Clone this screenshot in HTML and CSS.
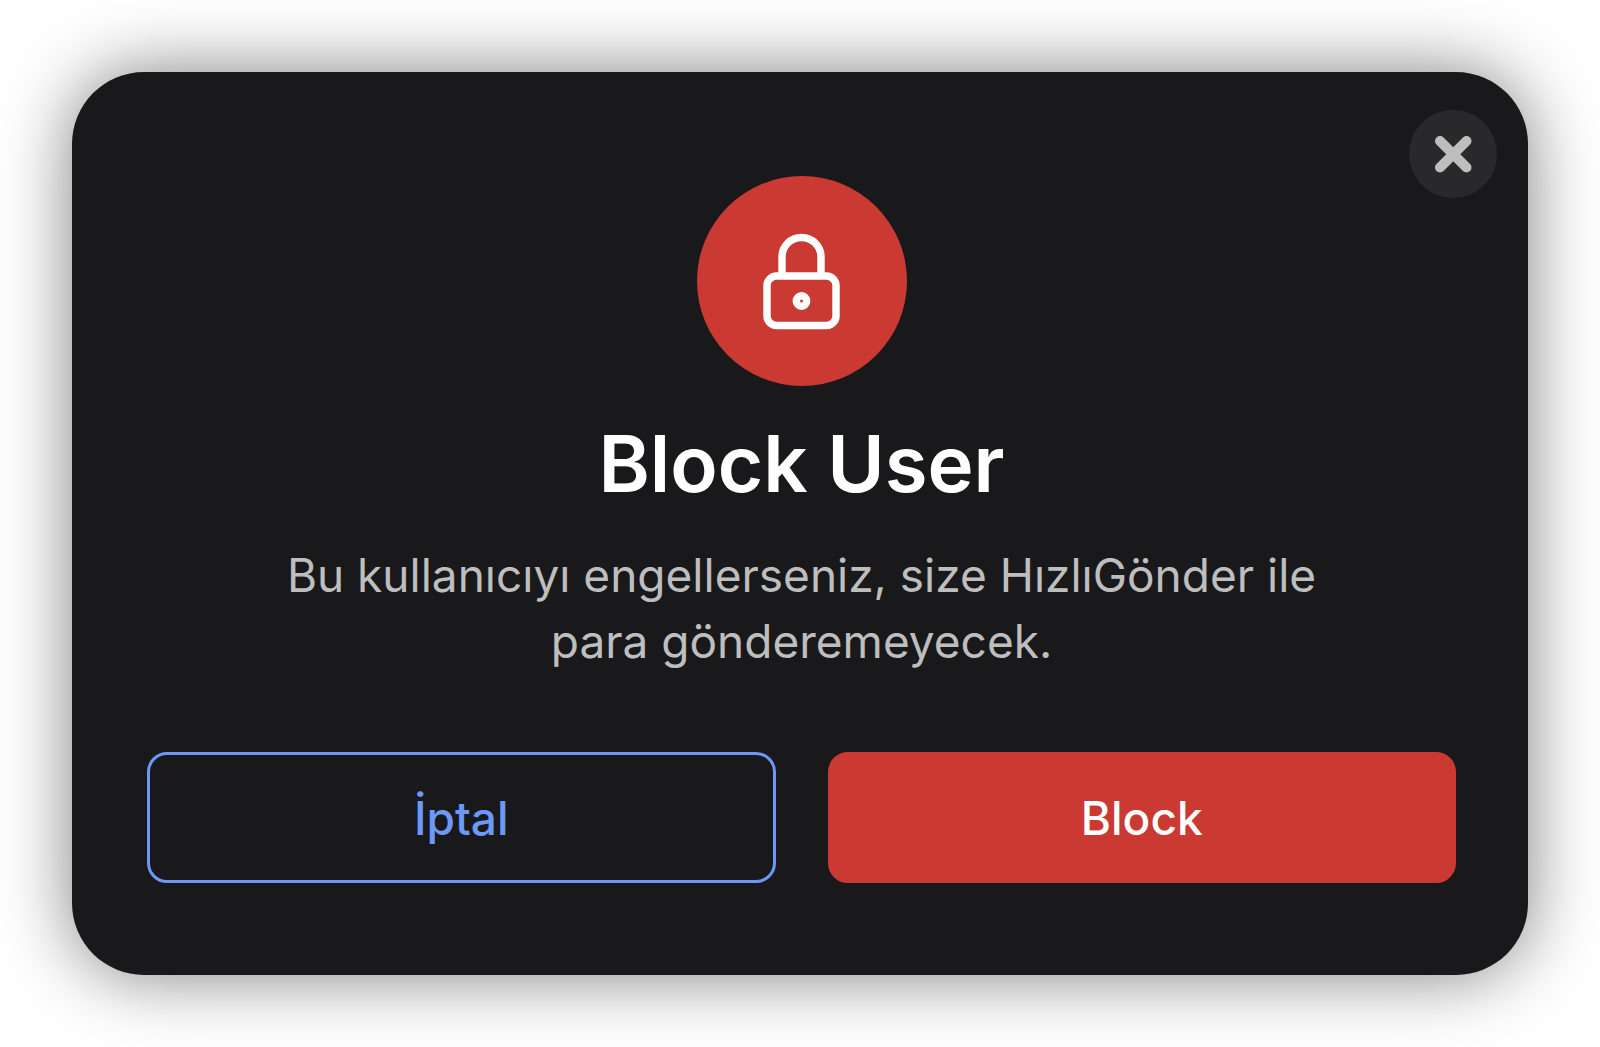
FILE: index.html
```
<!DOCTYPE html>
<html lang="tr">

<head>
	<meta charset="UTF-8">
	<meta name="viewport" content="width=device-width, initial-scale=1">
	<title>Block User</title>
	<link rel="stylesheet" href="styles.css">
</head>

<body>
	<div class="modal" role="dialog" aria-labelledby="modal-title" aria-describedby="modal-text">
		<button type="button" class="close" aria-label="Kapat">
			<svg viewBox="0 0 88 88" aria-hidden="true">
				<path d="M31 31l26.500 26.500M57.500 31l-26.500 26.500" />
			</svg>
		</button>
		<div class="badge">
			<svg viewBox="0 0 210 210" aria-hidden="true">
				<path d="M85 100V81a19.500 19.500 0 0 1 39 0v19" />
				<rect x="70" y="100" width="69" height="49.500" rx="9.500" />
				<circle cx="104.500" cy="125" r="5.200" />
			</svg>
		</div>
		<h1 class="title" id="modal-title">Block User</h1>
		<p class="text" id="modal-text">Bu kullanıcıyı engellerseniz, size HızlıGönder ile para gönderemeyecek.</p>
		<div class="actions">
			<button type="button" class="btn btn-cancel">İptal</button>
			<button type="button" class="btn btn-block">Block</button>
		</div>
	</div>
</body>

</html>
```

FILE: styles.css
```
* {
	box-sizing: border-box;
}

body {
	margin: 0;
	padding: 72px;
	background: #fff;
	font-family: Inter, "Liberation Sans", sans-serif;
}

.modal {
	position: relative;
	display: flex;
	flex-direction: column;
	align-items: center;
	padding: 104px 72px 92px 75px;
	border-radius: 72px;
	background: #19191b;
	box-shadow: 0 0 72px rgba(0, 0, 0, 0.5);
	text-align: center;
}

/* close button sits over the corner */
.close {
	position: absolute;
	top: 38px;
	right: 31px;
	width: 88px;
	height: 88px;
	padding: 0;
	border: 0;
	border-radius: 50%;
	background: #29292b;
	cursor: pointer;
}

.close svg {
	display: block;
	fill: none;
	stroke: #bebebe;
	stroke-width: 10;
	stroke-linecap: round;
}

.badge {
	width: 210px;
	height: 210px;
	border-radius: 50%;
	background: #ca3a32;
}

.badge svg {
	display: block;
	fill: none;
	stroke: #fff;
	stroke-width: 7.4;
}

.title {
	margin: 30px 0;
	color: #fff;
	font-size: 78px;
	font-weight: 600;
	line-height: 96px;
}

.text {
	max-width: 1100px;
	margin: 0 0 78px;
	color: #bebebe;
	font-size: 46px;
	line-height: 66px;
}

.actions {
	display: grid;
	grid-template-columns: 1fr 1fr;
	gap: 52px;
	width: 100%;
}

.btn {
	height: 131px;
	border: 3px solid #ca3a32;
	border-radius: 20px;
	font-family: inherit;
	font-size: 46px;
	font-weight: 500;
	cursor: pointer;
}

.btn-cancel {
	border-color: #6c98f8;
	background: transparent;
	color: #6c98f8;
}

.btn-block {
	background: #ca3a32;
	color: #fff;
}
```
